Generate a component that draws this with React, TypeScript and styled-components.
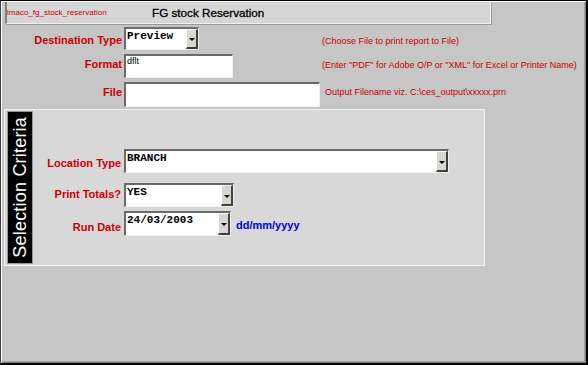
import React from "react";
import styled, { createGlobalStyle } from "styled-components";

const Global = createGlobalStyle`
  html, body { margin: 0; padding: 0; background: #c6c6c6; }
  body { font-family: "Liberation Sans", Arial, sans-serif; }
`;

const Window = styled.div`
  box-sizing: border-box;
  width: 588px;
  height: 365px;
  background: #c6c6c6;
  border-top: 1px solid #000;
  border-left: 1px solid #404040;
  border-right: 2px solid #000;
  border-bottom: 2px solid #000;
  box-shadow: inset 1px 1px 0 #fff, inset -1px -1px 0 #808080, inset -2px -2px 0 #a0a0a0;
  padding: 1px 0 0 4px;
  display: flex;
  flex-direction: column;
`;

const TitleBar = styled.div`
  box-sizing: border-box;
  width: 486px;
  height: 22px;
  background: #d6d6d6;
  border-left: 2px solid #808080;
  border-right: 1px solid #f4f4f4;
  border-bottom: 1px solid #f0f0f0;
  box-shadow: 1px 1px 0 #9a9a9a;
  display: flex;
  align-items: center;
  padding-left: 0;
`;

const Code = styled.span`
  color: #cc0000;
  font-size: 8px;
  width: 145px;
  white-space: nowrap;
`;

const Title = styled.span`
  color: #000;
  font-size: 11.7px;
  font-weight: normal;
  -webkit-text-stroke: 0.3px #000;
`;

const Form = styled.div`
  display: grid;
  grid-template-columns: 117px 196px auto;
  column-gap: 2px;
  align-items: center;
  margin-top: 3px;
`;

const Label = styled.div<{ $top?: number }>`
  color: #c80000;
  font-size: 11px;
  font-weight: bold;
  text-align: right;
  white-space: nowrap;
  align-self: start;
  padding-top: ${(p) => p.$top ?? 8}px;
`;

const Hint = styled.div<{ $dx?: number; $top?: number }>`
  color: #c80000;
  font-size: 9px;
  white-space: nowrap;
  align-self: start;
  padding-left: ${(p) => p.$dx ?? 0}px;
  padding-top: ${(p) => p.$top ?? 10}px;
`;

const FieldBox = styled.div<{ $w: number; $h: number; $mt?: number }>`
  box-sizing: border-box;
  width: ${(p) => p.$w}px;
  height: ${(p) => p.$h}px;
  margin-top: ${(p) => p.$mt ?? 0}px;
  flex-shrink: 0;
  background: #fff;
  border-top: 2px solid #6a6a6a;
  border-left: 2px solid #6a6a6a;
  border-right: 1px solid #f0f0f0;
  border-bottom: 1px solid #f0f0f0;
  display: flex;
  align-items: stretch;
`;

const SelectText = styled.span`
  flex: 1;
  font-family: "Liberation Mono", "Courier New", monospace;
  font-weight: bold;
  font-size: 11px;
  padding: 1px 0 0 1px;
  color: #000;
`;

const PlainText = styled.span`
  flex: 1;
  font-size: 9px;
  padding: 0 0 0 1px;
  color: #000;
`;

const DropBtn = styled.div`
  box-sizing: border-box;
  width: 12px;
  background: #d8d8d0;
  border-left: 1px solid #fff;
  border-top: 1px solid #fff;
  border-right: 2px solid #404040;
  border-bottom: 2px solid #404040;
  display: flex;
  align-items: center;
  justify-content: center;
  &::after {
    content: "";
    border-left: 3px solid transparent;
    border-right: 3px solid transparent;
    border-top: 3px solid #000;
    margin-top: 2px;
  }
`;

const Panel = styled.div`
  box-sizing: border-box;
  width: 481px;
  height: 157px;
  margin-top: 2px;
  margin-left: -1px;
  background: #d8d8d8;
  border: 1px solid #f2f2f2;
  padding: 1px 2px;
  display: flex;
`;

const SideLabel = styled.div`
  box-sizing: border-box;
  width: 26px;
  flex-shrink: 0;
  background: #000;
  border: 1px solid #9a9a9a;
  display: flex;
  align-items: center;
  justify-content: center;
`;

const SideText = styled.span`
  color: #fff;
  font-size: 18px;
  white-space: nowrap;
  writing-mode: vertical-rl;
  transform: rotate(180deg);
  letter-spacing: 0.2px;
`;

const Criteria = styled.div`
  display: grid;
  grid-template-columns: 88px auto;
  column-gap: 3px;
  align-content: start;
  padding-top: 38px;
`;

const FieldRow = styled.div<{ $mt?: number }>`
  display: flex;
  align-items: flex-start;
  margin-top: ${(p) => p.$mt ?? 0}px;
`;

const DateHint = styled.span`
  color: #0000e0;
  font-size: 11px;
  font-weight: bold;
  padding-top: 8px;
  padding-left: 5px;
`;

export default function App() {
  return (
    <>
      <Global />
      <Window>
        <TitleBar>
          <Code>lmaco_fg_stock_reservation</Code>
          <Title>FG stock Reservation</Title>
        </TitleBar>
        <Form>
          <Label $top={7}>Destination Type</Label>
          <FieldBox $w={75} $h={23} $mt={0}>
            <SelectText>Preview</SelectText>
            <DropBtn />
          </FieldBox>
          <Hint $dx={0} $top={9}>(Choose File to print report to File)</Hint>

          <Label $top={8}>Format</Label>
          <FieldBox $w={109} $h={24} $mt={4}>
            <PlainText>dflt</PlainText>
          </FieldBox>
          <Hint $dx={0} $top={10}>(Enter "PDF" for Adobe O/P or "XML" for Excel or Printer Name)</Hint>

          <Label $top={8}>File</Label>
          <FieldBox $w={196} $h={25} $mt={4}>
            <PlainText />
          </FieldBox>
          <Hint $dx={3} $top={9}>Output Filename viz. C:\ces_output\xxxxx.prn</Hint>
        </Form>
        <Panel>
          <SideLabel>
            <SideText>Selection Criteria</SideText>
          </SideLabel>
          <Criteria>
            <Label $top={8}>Location Type</Label>
            <FieldRow>
              <FieldBox $w={325} $h={24}>
                <SelectText>BRANCH</SelectText>
                <DropBtn />
              </FieldBox>
            </FieldRow>

            <Label $top={15}>Print Totals?</Label>
            <FieldRow $mt={10}>
              <FieldBox $w={110} $h={24}>
                <SelectText>YES</SelectText>
                <DropBtn />
              </FieldBox>
            </FieldRow>

            <Label $top={14}>Run Date</Label>
            <FieldRow $mt={4}>
              <FieldBox $w={107} $h={25}>
                <SelectText>24/03/2003</SelectText>
                <DropBtn />
              </FieldBox>
              <DateHint>dd/mm/yyyy</DateHint>
            </FieldRow>
          </Criteria>
        </Panel>
      </Window>
    </>
  );
}
